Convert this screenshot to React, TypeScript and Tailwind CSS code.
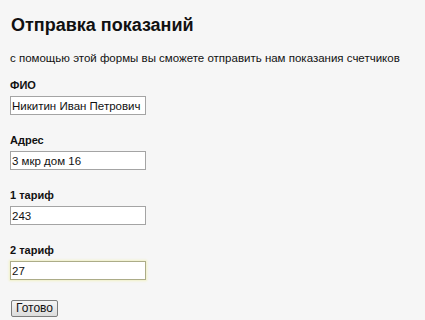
import React from "react";

const fields = [
  { label: "ФИО", value: "Никитин Иван Петрович" },
  { label: "Адрес", value: "3 мкр дом 16" },
  { label: "1 тариф", value: "243" },
  { label: "2 тариф", value: "27", focused: true },
];

export default function App() {
  return (
    <div className="h-[320px] w-[425px] overflow-hidden bg-[#f6f6f6] pl-[10px] pt-[14px] font-['Liberation_Sans',Arial,sans-serif] text-[#111]">
      <h1 className="ml-[1px] text-[18px] font-bold leading-[23px]">Отправка показаний</h1>
      <p className="mt-[14px] whitespace-nowrap text-[11.5px] leading-[14px]">
        с помощью этой формы вы сможете отправить нам показания счетчиков
      </p>

      <form className="mt-[13px] flex flex-col gap-[18px]">
        {fields.map((f) => (
          <div key={f.label} className="flex flex-col gap-[4px]">
            <label className="text-[11px] font-bold leading-[14px]">{f.label}</label>
            <input
              defaultValue={f.value}
              className={
                f.focused
                  ? "h-[19px] w-[136px] border border-[#acac88] bg-white px-[1px] font-['Liberation_Sans',Arial,sans-serif] text-[11.5px] text-[#111] shadow-[0_0_2px_1px_#f1f1c6] outline-none"
                  : "h-[19px] w-[136px] border border-[#a4a4a4] bg-white px-[1px] font-['Liberation_Sans',Arial,sans-serif] text-[11.5px] text-[#111] outline-none"
              }
            />
          </div>
        ))}

        <div className="flex pt-[2px]">
          <button
            type="button"
            className="ml-[1px] h-[17px] w-[47px] rounded-[2px] border border-[#7c7c7c] bg-gradient-to-b from-[#f5f5f5] to-[#dcdcdc] font-['Liberation_Sans',Arial,sans-serif] text-[12px] leading-[15px] text-[#111]"
          >
            Готово
          </button>
        </div>
      </form>
    </div>
  );
}
